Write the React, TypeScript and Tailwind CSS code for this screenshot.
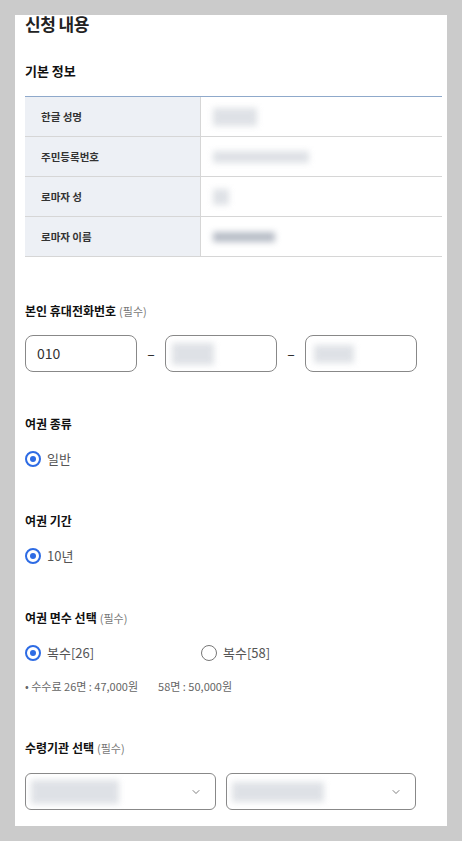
import { ChevronDown } from "lucide-react";

const font = { fontFamily: '"Noto Sans CJK KR", "Noto Sans", sans-serif' };

function Blur({ w, h, tone = "bg-gray-300" }: { w: string; h: string; tone?: string }) {
  return <div className={`${w} ${h} ${tone} blur-[3px] opacity-70`} />;
}

function Radio({ checked, label }: { checked?: boolean; label: string }) {
  return (
    <label className="flex items-center gap-[6px] h-[20px]">
      {checked ? (
        <span className="w-[16px] h-[16px] rounded-full border-2 border-[#2d6be4] flex items-center justify-center">
          <span className="w-[6px] h-[6px] rounded-full bg-[#2d6be4]" />
        </span>
      ) : (
        <span className="w-[16px] h-[16px] rounded-full border-[1.5px] border-[#777]" />
      )}
      <span className="text-[13px] text-[#555]">{label}</span>
    </label>
  );
}

function Label({ text, required }: { text: string; required?: boolean }) {
  return (
    <div className="text-[12px] leading-[20px] font-bold text-[#111]">
      {text}
      {required && <span className="ml-[3px] text-[11px] font-normal text-[#777]">(필수)</span>}
    </div>
  );
}

const rows = [
  { label: "한글 성명", blur: <Blur w="w-[44px]" h="h-[18px]" /> },
  { label: "주민등록번호", blur: <Blur w="w-[96px]" h="h-[12px]" /> },
  { label: "로마자 성", blur: <Blur w="w-[16px]" h="h-[16px]" /> },
  { label: "로마자 이름", blur: <Blur w="w-[62px]" h="h-[10px]" tone="bg-gray-400" /> },
];

export default function App() {
  return (
    <div className="min-h-screen bg-[#cbcbcb] px-[15px] pt-[15px]" style={font}>
      <div className="bg-white pl-[10px] pr-[5px] pb-[16px]">
        <h1 className="text-[17px] leading-[17px] tracking-[-0.03em] font-bold text-[#222]">신청 내용</h1>

        <h2 className="mt-[29px] text-[13px] leading-[20px] font-bold text-[#111]">기본 정보</h2>

        <div className="mt-[15px] border-t border-[#8fa9cb]">
          {rows.map((r) => (
            <div key={r.label} className="flex h-[40px] border-b border-[#d6d6d6]">
              <div className="w-[176px] bg-[#edf0f5] border-r border-[#d6d6d6] pl-[16px] flex items-center text-[10.5px] font-bold text-[#333]">
                {r.label}
              </div>
              <div className="flex-1 pl-[12px] flex items-center">{r.blur}</div>
            </div>
          ))}
        </div>

        <div className="mt-[44px]">
          <Label text="본인 휴대전화번호" required />
        </div>
        <div className="mt-[14px] flex items-center">
          <div className="w-[112px] h-[37px] rounded-[8px] border border-[#888] flex items-center pl-[11px] text-[14px] text-[#333]">
            010
          </div>
          <span className="w-[28px] text-center text-[14px] text-[#222]">–</span>
          <div className="w-[112px] h-[37px] rounded-[8px] border border-[#888] flex items-center pl-[6px]">
            <Blur w="w-[42px]" h="h-[22px]" tone="bg-gray-300" />
          </div>
          <span className="w-[28px] text-center text-[14px] text-[#222]">–</span>
          <div className="w-[112px] h-[37px] rounded-[8px] border border-[#888] flex items-center pl-[8px]">
            <Blur w="w-[40px]" h="h-[18px]" tone="bg-gray-300" />
          </div>
        </div>

        <div className="mt-[42px]">
          <Label text="여권 종류" />
        </div>
        <div className="mt-[15px]">
          <Radio checked label="일반" />
        </div>

        <div className="mt-[42px]">
          <Label text="여권 기간" />
        </div>
        <div className="mt-[15px]">
          <Radio checked label="10년" />
        </div>

        <div className="mt-[42px]">
          <Label text="여권 면수 선택" required />
        </div>
        <div className="mt-[15px] flex">
          <div className="w-[176px]">
            <Radio checked label="복수[26]" />
          </div>
          <Radio label="복수[58]" />
        </div>
        <div className="mt-[15px] text-[11px] leading-[16px] text-[#666] flex">
          <span>• 수수료 26면 : 47,000원</span>
          <span className="ml-[20px]">58면 : 50,000원</span>
        </div>

        <div className="mt-[44px]">
          <Label text="수령기관 선택" required />
        </div>
        <div className="mt-[15px] flex gap-[10px]">
          <div className="w-[191px] h-[37px] rounded-[6px] border border-[#888] flex items-center justify-between pl-[5px] pr-[13px]">
            <Blur w="w-[88px]" h="h-[24px]" tone="bg-gray-300" />
            <ChevronDown size={12} strokeWidth={1.5} className="text-[#555]" />
          </div>
          <div className="w-[190px] h-[37px] rounded-[6px] border border-[#888] flex items-center justify-between pl-[5px] pr-[13px]">
            <Blur w="w-[92px]" h="h-[20px]" tone="bg-gray-300" />
            <ChevronDown size={12} strokeWidth={1.5} className="text-[#555]" />
          </div>
        </div>
      </div>
    </div>
  );
}
